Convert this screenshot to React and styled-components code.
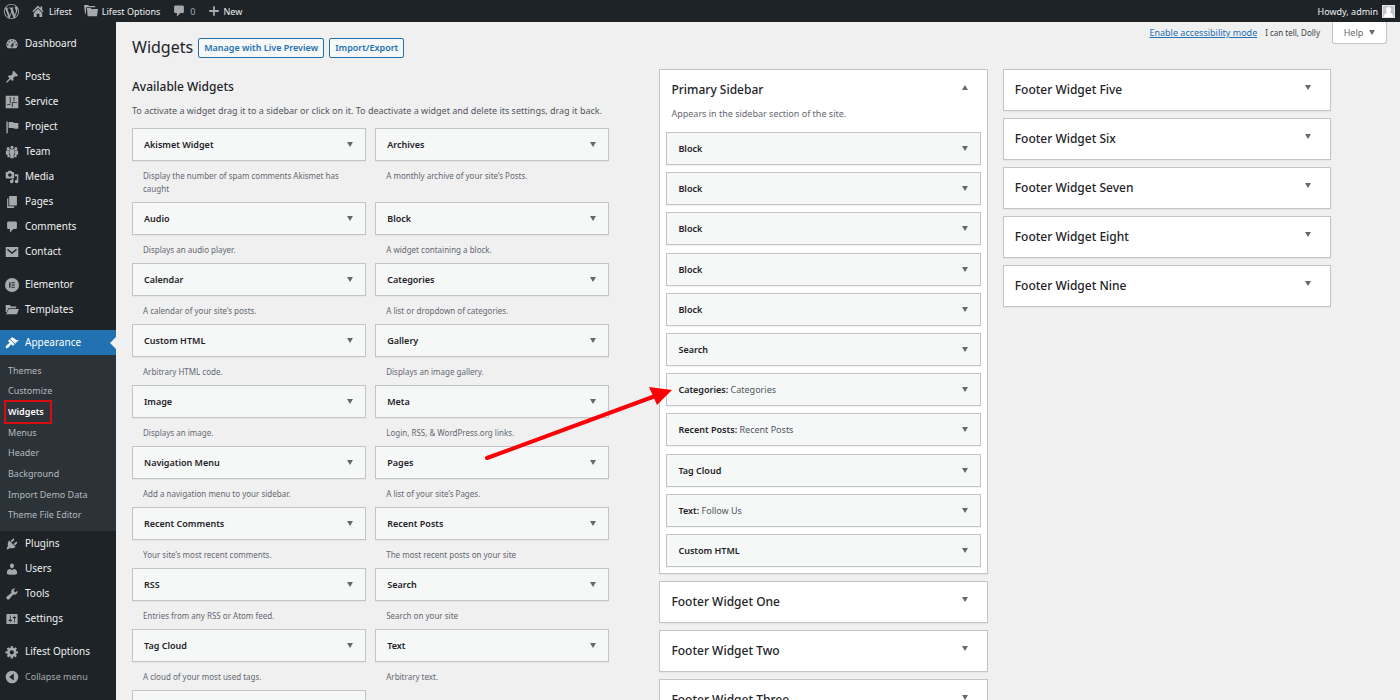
import React from "react";
import styled, { createGlobalStyle, css } from "styled-components";

const GlobalStyle = createGlobalStyle`
  *, *::before, *::after { box-sizing: border-box; }
  html, body { margin: 0; padding: 0; }
  body {
    background: #f0f0f1;
    color: #3c434a;
    font-family: "Noto Sans", "Open Sans", sans-serif;
    font-size: 9px;
    line-height: 13px;
  }
  h1, h2, h3, p, ul { margin: 0; padding: 0; font-size: inherit; font-weight: 400; }
  ul { list-style: none; }
  button { font: inherit; color: inherit; cursor: pointer; }
  a { color: inherit; text-decoration: none; }
`;

/* ---------- icons ---------- */

const paths = {
  wordpress:
    "M20 10c0-5.51-4.49-10-10-10C4.48 0 0 4.49 0 10c0 5.52 4.48 10 10 10 5.51 0 10-4.48 10-10zM7.78 15.37L4.37 6.22c.55-.02 1.17-.08 1.17-.08.5-.06.44-1.13-.06-1.11 0 0-1.45.11-2.37.11-.18 0-.37 0-.58-.01C4.12 2.69 6.87 1.11 10 1.11c2.33 0 4.45.87 6.05 2.34-.68-.11-1.65.39-1.65 1.58 0 .74.45 1.36.9 2.1.35.61.55 1.36.55 2.46 0 1.49-1.4 5-1.4 5l-3.03-8.37c.54-.02.82-.17.82-.17.5-.05.44-1.25-.06-1.22 0 0-1.44.12-2.38.12-.87 0-2.33-.12-2.33-.12-.5-.03-.56 1.2-.06 1.22l.92.08 1.26 3.41zM17.41 10c.24-.64.74-1.87.43-4.25.7 1.29 1.05 2.71 1.05 4.25 0 3.29-1.73 6.24-4.4 7.78.97-2.59 1.94-5.2 2.92-7.78zM6.1 18.09C3.12 16.65 1.11 13.53 1.11 10c0-1.3.23-2.48.72-3.59C3.25 10.3 4.67 14.2 6.1 18.09zm4.03-6.63l2.58 6.98c-.86.29-1.76.45-2.71.45-.79 0-1.57-.11-2.29-.33.81-2.38 1.62-4.74 2.42-7.1z",
  home: "M16 8.5l2 2-1.400 1.400L10 5.300l-6.600 6.600L2 10.500 10 2.300l3.500 3.600V3.500H16zM10 6.800l6 6V18.500h-4v-4.500H8v4.500H4v-5.700z",
  folders:
    "M0 1.500h6l1 1.500h9v1.800H3.200L2.600 14H1.500zM4.200 5.800h5.300l1 1.500H20L18.500 17.500H5.200z",
  comment:
    "M5 2h10c1.100 0 2 .9 2 2v7c0 1.100-.9 2-2 2h-3l-5 5v-5H5c-1.100 0-2-.9-2-2V4c0-1.100.9-2 2-2z",
  plus: "M18 8.500v3h-6.500V18h-3v-6.500H2v-3h6.500V2h3v6.500z",
  dashboard:
    "M3.76 16h12.48A7.998 7.998 0 0010 3a7.998 7.998 0 00-6.24 13zM10 4c.55 0 1 .45 1 1s-.45 1-1 1-1-.45-1-1 .45-1 1-1zM6 6c.55 0 1 .45 1 1s-.45 1-1 1-1-.45-1-1 .45-1 1-1zm8 0c.55 0 1 .45 1 1s-.45 1-1 1-1-.45-1-1 .45-1 1-1zm-5.37 5.55L12 7v6c0 1.1-.9 2-2 2s-2-.9-2-2c0-.57.24-1.08.63-1.45zM4 10c.55 0 1 .45 1 1s-.45 1-1 1-1-.45-1-1 .45-1 1-1zm12 0c.55 0 1 .45 1 1s-.45 1-1 1-1-.45-1-1 .45-1 1-1zm-5 3c0-.55-.45-1-1-1s-1 .45-1 1 .45 1 1 1 1-.45 1-1z",
  pin: "M10.44 3.02l1.82-1.82 6.36 6.35-1.83 1.82c-1.05-.68-2.48-.57-3.41.36l-.75.75c-.92.93-1.04 2.35-.35 3.41l-1.83 1.82-2.41-2.41-2.8 2.79c-.42.42-3.38 2.71-3.8 2.29s1.86-3.39 2.28-3.81l2.79-2.79L4.1 9.36l1.83-1.82c1.05.69 2.48.57 3.4-.36l.75-.75c.93-.92 1.05-2.35.36-3.41z",
  blocks:
    "M1 1h18v18H1zM6.800 3v9h1.200V3zM12.200 3v6h1.200V3zM3 12.800v1.200h5v-1.200zM9.800 10.200v6.800h1.200v-5.600h6v-1.200z",
  flag: "M2 2h2v17H2zM5.200 3h5c2 0 2 1.200 4 1.200H19V12.500h-5c-1.800 0-2-1-4-1H5.200z",
  groups:
    "M10 1a2.300 2.300 0 110 4.600A2.300 2.300 0 0110 1zM4.500 3a2.200 2.200 0 110 4.400 2.200 2.200 0 010-4.400zM15.500 3a2.200 2.200 0 110 4.400 2.200 2.200 0 010-4.400zM7.800 6.200h4.400c1 0 1.500.6 1.500 1.500v5.300h-1.200v6h-5v-6H6.300V7.700c0-.9.500-1.500 1.500-1.500zM2.800 8h2.800v6h1.200v3.500H3.500V14H1.300V9.500c0-.9.500-1.500 1.500-1.500zM17.200 8h-2.800v6h-1.200v3.500h3.300V14h2.200V9.500c0-.9-.5-1.500-1.500-1.500z",
  media:
    "M13 11V4c0-.55-.45-1-1-1h-1.670L9 1H5L3.670 3H2c-.55 0-1 .45-1 1v7c0 .55.45 1 1 1h10c.55 0 1-.45 1-1zM7 4.500c1.380 0 2.500 1.120 2.500 2.500S8.380 9.500 7 9.500 4.500 8.380 4.500 7 5.620 4.500 7 4.500zM14 6h5v10.500c0 1.380-1.120 2.500-2.500 2.500S14 17.880 14 16.500s1.120-2.500 2.500-2.500c.17 0 .34.02.5.05V9h-3V6zm-4 8.050V13h2v3.500c0 1.380-1.120 2.500-2.500 2.500S7 17.880 7 16.500 8.120 14 9.500 14c.17 0 .34.02.5.05z",
  pages: "M6 15V1.500h11V15H6zm-1.200 1.200H13V18.500H3V5h1.800v11.200z",
  mail: "M1 3h18v14H1zM4 5.500L3 7l7 5.800L17 7l-1-1.500-6 4.700z",
  elementor:
    "M10 0a10 10 0 100 20 10 10 0 000-20zM6 6h1.800v8H6zM9.300 6H14v1.500H9.300zM9.300 9.300H14v1.500H9.300zM9.300 12.500H14V14H9.300z",
  folderOpen:
    "M1 3h6l1.500 2H16v2.500H5L2.500 13H1zM5.500 8.500H20L17 16H1.500z",
  brush:
    "M14.480 11.060L7.410 3.990l1.500-1.500c.5-.56 2.300-.47 3.510.32 1.210.8 1.430 1.280 2.910 2.100 1.180.64 2.450 1.260 4.450.85zm-.71.71L6.700 4.700 4.930 6.470c-.39.39-.39 1.020 0 1.410l1.060 1.060c.39.39.39 1.030 0 1.420-.6.6-1.430 1.110-2.210 1.690-.35.26-.7.53-1.010.84C1.430 14.230.4 16.080 1.400 17.070c.99 1 2.840-.03 4.180-1.360.31-.31.58-.66.85-1.020.57-.78 1.080-1.610 1.690-2.210.39-.39 1.020-.39 1.410 0l1.060 1.060c.39.39 1.020.39 1.410 0z",
  plug: "M13.110 4.360L9.870 7.600 8 5.730l3.240-3.240c.35-.34 1.050-.2 1.560.32.52.51.66 1.210.31 1.550zm-8 1.770l.91-1.120 9.010 9.010-1.190.84c-.71.71-2.630 1.160-3.820 1.160H6.140L4.900 17.260c-.59.59-1.540.59-2.120 0-.59-.58-.59-1.530 0-2.120l1.240-1.240v-3.880c0-1.130.4-3.190 1.090-3.890zm7.260 3.970l3.240-3.240c.34-.35 1.040-.21 1.550.31.52.51.66 1.210.31 1.550l-3.240 3.250z",
  user: "M10 9.250c-2.270 0-2.730-3.440-2.730-3.440C7 4.020 7.820 2 9.970 2c2.160 0 2.980 2.020 2.710 3.810 0 0-.41 3.440-2.680 3.440zm0 2.570L12.720 10c2.390 0 4.520 2.330 4.520 4.530v2.490s-3.650 1.130-7.240 1.130c-3.650 0-7.240-1.130-7.240-1.130v-2.490c0-2.250 1.940-4.480 4.470-4.480z",
  wrench:
    "M16.680 9.770c-1.340 1.340-3.300 1.670-4.950.99l-5.410 6.520c-.99.99-2.590.99-3.580 0s-.99-2.590 0-3.570l6.520-5.420c-.68-1.650-.35-3.610.99-4.950 1.280-1.280 3.120-1.620 4.720-1.060l-2.890 2.890 2.820 2.820 2.860-2.870c.53 1.580.18 3.390-1.080 4.650z",
  sliders:
    "M18 16V4c0-.55-.45-1-1-1H3c-.55 0-1 .45-1 1v12c0 .55.45 1 1 1h14c.55 0 1-.45 1-1zM8 11h1c.55 0 1 .45 1 1s-.45 1-1 1H8v1.500c0 .28-.22.5-.5.5s-.5-.22-.5-.5V13H6c-.55 0-1-.45-1-1s.45-1 1-1h1V5.500c0-.28.22-.5.5-.5s.5.22.5.5V11zm5-2h-1c-.55 0-1-.45-1-1s.45-1 1-1h1V5.500c0-.28.22-.5.5-.5s.5.22.5.5V7h1c.55 0 1 .45 1 1s-.45 1-1 1h-1v5.500c0 .28-.22.5-.5.5s-.5-.22-.5-.5V9z",
  gear: "M18.500 12.200h-2.400c-.17.600-.4 1.100-.7 1.600l1.700 1.700-2.400 2.400-1.700-1.700c-.5.300-1 .500-1.500.700V19.300H8v-2.400c-.6-.2-1.100-.4-1.600-.7l-1.700 1.700-2.400-2.400L4 13.800c-.3-.5-.5-1-.7-1.600H.8V8.800h2.500c.2-.6.4-1.100.7-1.600L2.300 5.500l2.400-2.400 1.700 1.700c.5-.3 1-.5 1.600-.7V1.700h3.500v2.400c.5.200 1 .4 1.500.7l1.700-1.700 2.400 2.400-1.700 1.700c.3.500.5 1 .7 1.600h2.400zM9.700 13.500c1.660 0 3-1.340 3-3s-1.340-3-3-3-3 1.340-3 3 1.340 3 3 3z",
  collapse:
    "M10 1a9 9 0 100 18 9 9 0 000-18zM12.500 5v10L6 10z",
  person:
    "M10 2a4.500 4.500 0 014.500 4.800c0 2.200-1 4.200-2.300 5.200 3.300.9 5.800 2.500 6.300 8h-17c.5-5.500 3-7.100 6.300-8-1.300-1-2.300-3-2.300-5.200A4.500 4.500 0 0110 2z",
};

const Svg = styled.svg`
  display: block;
  flex: none;
  fill: currentColor;
`;

const Icon = ({ name, size = 14 }) => (
  <Svg viewBox="0 0 20 20" width={size} height={size} aria-hidden="true">
    <path fillRule={name === "groups" ? "nonzero" : "evenodd"} d={paths[name]} />
  </Svg>
);

const Caret = ({ up }) => (
  <Svg viewBox="0 0 6 5" width="6" height="5" aria-hidden="true">
    <path d={up ? "M0 5L3 0L6 5z" : "M0 0h6L3 5z"} />
  </Svg>
);

/* ---------- frame ---------- */

const Shell = styled.div`
  position: relative;
  display: flex;
  flex-direction: column;
  height: 100vh;
  overflow: hidden;
`;

const AdminBar = styled.header`
  display: flex;
  align-items: center;
  justify-content: space-between;
  flex: none;
  height: 22px;
  padding: 0 5px 0 4px;
  background: #1d2327;
  color: #f0f0f1;
`;

const BarGroup = styled.nav`
  display: flex;
  align-items: center;
  gap: 12px;
`;

const BarLink = styled.a`
  display: flex;
  align-items: center;
  gap: 4px;
  color: ${(p) => (p.$muted ? "#a7aaad" : "#f0f0f1")};
`;

const BarIcon = styled.span`
  color: #a7aaad;
`;

const Avatar = styled.span`
  display: flex;
  align-items: flex-end;
  justify-content: center;
  width: 13px;
  height: 13px;
  border: 1px solid #e4e4e5;
  background: #c3c4c7;
  color: #ffffff;
`;

const Body = styled.div`
  display: flex;
  flex: 1;
  min-height: 0;
`;

/* ---------- admin menu ---------- */

const Menu = styled.nav`
  flex: none;
  width: 116px;
  padding-top: 9px;
  background: #1d2327;
`;

const MenuItem = styled.li`
  margin-top: ${(p) => (p.$spaced ? "8px" : "0")};
`;

const menuRow = css`
  position: relative;
  display: flex;
  align-items: center;
  gap: 6px;
  width: 100%;
  height: 25px;
  padding: 0 5px;
  border: 0;
`;

const MenuLink = styled.a`
  ${menuRow}
  background: ${(p) => (p.$active ? "#2271b1" : "transparent")};
  color: ${(p) => (p.$active ? "#ffffff" : "#f0f0f1")};
  font-size: 10px;

  svg { color: ${(p) => (p.$active ? "#ffffff" : "#a7aaad")}; }

  &::after {
    content: "";
    display: ${(p) => (p.$active ? "block" : "none")};
    position: absolute;
    top: 7px;
    right: 0;
    border: 6px solid transparent;
    border-left-width: 0;
    border-right-color: #f0f0f1;
  }
`;

const CollapseButton = styled.button`
  ${menuRow}
  background: transparent;
  color: #a7aaad;
`;

const Submenu = styled.ul`
  display: flex;
  flex-direction: column;
  min-height: 176px;
  padding: 5px 0 6px;
  background: #2c3338;
`;

const SubItem = styled.li`
  display: flex;
  flex: 1;
  align-items: center;
  padding-left: 8px;
`;

const SubLink = styled.a`
  position: relative;
  color: ${(p) => (p.$current ? "#ffffff" : "#b4b9be")};
  font-weight: ${(p) => (p.$current ? 600 : 400)};
`;

const Highlight = styled.span`
  position: absolute;
  inset: -5px -8px -6px -4px;
  border: 2px solid #d90d0d;
`;

/* ---------- content ---------- */

const Main = styled.main`
  flex: 1;
  min-width: 0;
  padding-left: 16px;
`;

const TopRow = styled.div`
  display: flex;
  align-items: flex-start;
  justify-content: space-between;
  height: 47px;
  padding-right: 13px;
`;

const TitleGroup = styled.div`
  display: flex;
  align-items: center;
  gap: 5px;
  padding-top: 15px;
`;

const PageTitle = styled.h1`
  color: #1d2327;
  font-size: 16px;
  line-height: 21px;
`;

const ActionButton = styled.button`
  height: 20px;
  padding: 0 5px;
  border: 1px solid #2271b1;
  border-radius: 2px;
  background: #f6f7f7;
  color: #2271b1;
  font-weight: 600;
  line-height: 18px;
`;

const Tools = styled.div`
  display: flex;
  align-items: flex-start;
`;

const AccessLink = styled.a`
  margin: 4px 8px 0 0;
  color: #2271b1;
  text-decoration: underline;
`;

const Lyric = styled.p`
  margin: 4px 12px 0 0;
  font-size: 8px;
`;

const HelpButton = styled.button`
  display: flex;
  align-items: center;
  justify-content: center;
  gap: 6px;
  width: 55px;
  height: 22px;
  padding: 0;
  border: 1px solid #c3c4c7;
  border-top: 0;
  border-radius: 0 0 3px 3px;
  background: #ffffff;
  color: #646970;
`;

const Columns = styled.div`
  display: grid;
  grid-template-columns: minmax(0, 512fr) minmax(0, 328fr) minmax(0, 328fr);
  gap: 15px;
  align-items: start;
  margin-right: 69px;
`;

const Available = styled.section`
  padding: 10px 35px 0 0;
`;

const SectionTitle = styled.h2`
  color: #1d2327;
  font-size: 12px;
  font-weight: 500;
  line-height: 16px;
`;

const Intro = styled.p`
  margin: 9px 0 11px;
  color: #50575e;
  white-space: nowrap;
`;

const WidgetGrid = styled.ul`
  display: grid;
  grid-template-columns: 1fr 1fr;
  column-gap: 9px;
`;

const CardHeading = styled.h3`
  border: 1px solid #c3c4c7;
  background: #f6f7f7;
  box-shadow: 0 1px 1px rgba(0, 0, 0, 0.04);
`;

const CardButton = styled.button`
  display: flex;
  align-items: center;
  justify-content: space-between;
  width: 100%;
  height: 31px;
  padding: 0 12px 0 11px;
  border: 0;
  background: transparent;
  color: #1d2327;
  font-weight: 600;

  svg { color: #646970; }
`;

const Instance = styled.span`
  color: #50575e;
  font-weight: 400;
`;

const CardText = styled.p`
  padding: 8px 11px 7px;
  color: #646970;
  font-size: 8px;
`;

const AreaColumn = styled.div`
  display: flex;
  flex-direction: column;
  gap: 7px;
`;

const Area = styled.section`
  padding-bottom: ${(p) => (p.$open ? "6px" : "0")};
  border: 1px solid #c3c4c7;
  background: #ffffff;
  box-shadow: 0 1px 1px rgba(0, 0, 0, 0.04);
`;

const AreaButton = styled.button`
  display: flex;
  align-items: flex-start;
  justify-content: space-between;
  width: 100%;
  height: ${(p) => (p.$open ? "34px" : "40px")};
  padding: 12px 19px 0 11px;
  border: 0;
  background: transparent;
  color: #1d2327;
  font-size: 12px;
  font-weight: 500;
  line-height: 16px;

  svg {
    margin-top: 3px;
    color: #646970;
  }
`;

const AreaText = styled.p`
  padding: 3px 11px 12px;
  color: #646970;
`;

const AreaList = styled.ul`
  display: flex;
  flex-direction: column;
  justify-content: space-between;
  min-height: 435px;
  padding: 0 6px;
`;

const Pointer = styled.svg`
  position: absolute;
  top: 384px;
  left: 482px;
  pointer-events: none;
`;

/* ---------- data ---------- */

const menu = [
  ["Dashboard", "dashboard"],
  ["Posts", "pin", true],
  ["Service", "blocks"],
  ["Project", "flag"],
  ["Team", "groups"],
  ["Media", "media"],
  ["Pages", "pages"],
  ["Comments", "comment"],
  ["Contact", "mail"],
  ["Elementor", "elementor", true],
  ["Templates", "folderOpen"],
  ["Appearance", "brush", true],
  ["Plugins", "plug"],
  ["Users", "user"],
  ["Tools", "wrench"],
  ["Settings", "sliders"],
  ["Lifest Options", "gear", true],
];

const submenu = [
  "Themes",
  "Customize",
  "Widgets",
  "Menus",
  "Header",
  "Background",
  "Import Demo Data",
  "Theme File Editor",
];

const widgets = [
  ["Akismet Widget", "Display the number of spam comments Akismet has caught"],
  ["Archives", "A monthly archive of your site’s Posts."],
  ["Audio", "Displays an audio player."],
  ["Block", "A widget containing a block."],
  ["Calendar", "A calendar of your site’s posts."],
  ["Categories", "A list or dropdown of categories."],
  ["Custom HTML", "Arbitrary HTML code."],
  ["Gallery", "Displays an image gallery."],
  ["Image", "Displays an image."],
  ["Meta", "Login, RSS, & WordPress.org links."],
  ["Navigation Menu", "Add a navigation menu to your sidebar."],
  ["Pages", "A list of your site’s Pages."],
  ["Recent Comments", "Your site’s most recent comments."],
  ["Recent Posts", "The most recent posts on your site"],
  ["RSS", "Entries from any RSS or Atom feed."],
  ["Search", "Search on your site"],
  ["Tag Cloud", "A cloud of your most used tags."],
  ["Text", "Arbitrary text."],
  ["Video", "Displays a video player."],
];

const primary = [
  ["Block"],
  ["Block"],
  ["Block"],
  ["Block"],
  ["Block"],
  ["Search"],
  ["Categories", "Categories"],
  ["Recent Posts", "Recent Posts"],
  ["Tag Cloud"],
  ["Text", "Follow Us"],
  ["Custom HTML"],
];

/* ---------- parts ---------- */

const BarItem = ({ icon, size, children, ...rest }) => (
  <BarLink href="#" {...rest}>
    <BarIcon><Icon name={icon} size={size} /></BarIcon>
    {children}
  </BarLink>
);

const WidgetCard = ({ name, instance }) => (
  <CardHeading>
    <CardButton type="button">
      <span>
        {name}
        {instance && <>: <Instance>{instance}</Instance></>}
      </span>
      <Caret />
    </CardButton>
  </CardHeading>
);

const WidgetArea = ({ title, children }) => (
  <Area $open={Boolean(children)}>
    <h2>
      <AreaButton type="button" aria-expanded={Boolean(children)} $open={Boolean(children)}>
        {title}
        <Caret up={Boolean(children)} />
      </AreaButton>
    </h2>
    {children}
  </Area>
);

export default function App() {
  return (
    <Shell>
      <GlobalStyle />
      <AdminBar>
        <BarGroup aria-label="Toolbar">
          <BarItem icon="wordpress" size={15} aria-label="About WordPress" />
          <BarItem icon="home">Lifest</BarItem>
          <BarItem icon="folders">Lifest Options</BarItem>
          <BarItem icon="comment" $muted>0</BarItem>
          <BarItem icon="plus" size={12}>New</BarItem>
        </BarGroup>
        <BarLink href="#">
          Howdy, admin
          <Avatar><Icon name="person" size={11} /></Avatar>
        </BarLink>
      </AdminBar>

      <Body>
        <Menu aria-label="Main menu">
          <ul>
            {menu.map(([label, icon, spaced]) => (
              <MenuItem key={label} $spaced={spaced}>
                <MenuLink href="#" $active={label === "Appearance"}>
                  <Icon name={icon} />
                  {label}
                </MenuLink>
                {label === "Appearance" && (
                  <Submenu>
                    {submenu.map((item) => (
                      <SubItem key={item}>
                        <SubLink href="#" $current={item === "Widgets"}>
                          {item}
                          {item === "Widgets" && <Highlight />}
                        </SubLink>
                      </SubItem>
                    ))}
                  </Submenu>
                )}
              </MenuItem>
            ))}
            <MenuItem>
              <CollapseButton type="button"><Icon name="collapse" />Collapse menu</CollapseButton>
            </MenuItem>
          </ul>
        </Menu>

        <Main>
          <TopRow>
            <TitleGroup>
              <PageTitle>Widgets</PageTitle>
              <ActionButton type="button">Manage with Live Preview</ActionButton>
              <ActionButton type="button">Import/Export</ActionButton>
            </TitleGroup>
            <Tools>
              <AccessLink href="#">Enable accessibility mode</AccessLink>
              <Lyric>I can tell, Dolly</Lyric>
              <HelpButton type="button">Help <Caret /></HelpButton>
            </Tools>
          </TopRow>

          <Columns>
            <Available>
              <SectionTitle>Available Widgets</SectionTitle>
              <Intro>
                To activate a widget drag it to a sidebar or click on it. To deactivate a
                widget and delete its settings, drag it back.
              </Intro>
              <WidgetGrid>
                {widgets.map(([name, text]) => (
                  <li key={name}>
                    <WidgetCard name={name} />
                    <CardText>{text}</CardText>
                  </li>
                ))}
              </WidgetGrid>
            </Available>

            <AreaColumn>
              <WidgetArea title="Primary Sidebar">
                <AreaText>Appears in the sidebar section of the site.</AreaText>
                <AreaList>
                  {primary.map(([name, instance], i) => (
                    <li key={i}><WidgetCard name={name} instance={instance} /></li>
                  ))}
                </AreaList>
              </WidgetArea>
              <WidgetArea title="Footer Widget One" />
              <WidgetArea title="Footer Widget Two" />
              <WidgetArea title="Footer Widget Three" />
            </AreaColumn>

            <AreaColumn>
              <WidgetArea title="Footer Widget Five" />
              <WidgetArea title="Footer Widget Six" />
              <WidgetArea title="Footer Widget Seven" />
              <WidgetArea title="Footer Widget Eight" />
              <WidgetArea title="Footer Widget Nine" />
            </AreaColumn>
          </Columns>
        </Main>
      </Body>

      <Pointer width="192" height="80" viewBox="0 0 192 80" aria-hidden="true">
        <path d="M5 74L176 11" stroke="#fb0007" strokeWidth="4" strokeLinecap="round" />
        <path d="M167 3L190 6L175 21z" fill="#fb0007" />
      </Pointer>
    </Shell>
  );
}
